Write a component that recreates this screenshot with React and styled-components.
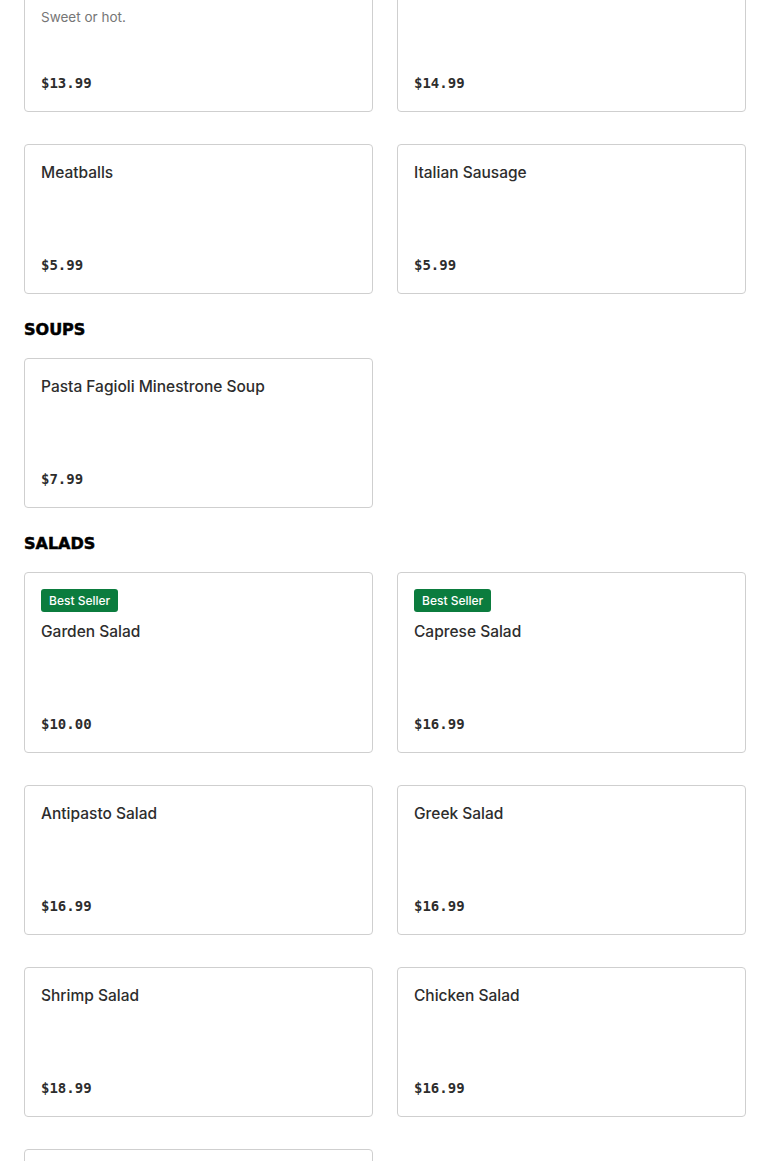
import React from 'react';
import styled, { createGlobalStyle } from 'styled-components';

const GlobalStyle = createGlobalStyle`
  html, body {
    margin: 0;
    padding: 0;
    background: #fff;
    overflow: hidden;
  }
  body {
    font-family: Inter, "Noto Sans", sans-serif;
    color: #2d2d2d;
  }
`;

const Page = styled.div`
  padding: 0 24px;
  margin-top: -38px;
`;

const Section = styled.section`
  display: flex;
  flex-direction: column;
`;

const SectionTitle = styled.h2`
  margin: 24px 0 16px;
  font-family: "DejaVu Sans", sans-serif;
  font-weight: 700;
  font-size: 16px;
  line-height: 24px;
  color: #000;
  -webkit-text-stroke: 0.5px #000;
`;

const Grid = styled.div`
  display: grid;
  grid-template-columns: 1fr 1fr;
  column-gap: 24px;
  row-gap: 32px;
`;

const Card = styled.div`
  box-sizing: border-box;
  min-height: ${p => (p.$featured ? 181 : 150)}px;
  display: flex;
  flex-direction: column;
  padding: 16px;
  border: 1px solid #cfcfcf;
  border-radius: 4px;
  background: #fff;
`;

const Badge = styled.span`
  align-self: flex-start;
  height: 23px;
  line-height: 23px;
  padding: 0 8px;
  margin-bottom: 8px;
  border-radius: 3px;
  background: #0b7c3e;
  color: #fff;
  font-size: 12px;
  font-weight: 500;
`;

const Name = styled.div`
  font-size: 15.5px;
  font-weight: 500;
  line-height: 24px;
  color: #2d2d2d;
`;

const Desc = styled.div`
  margin-top: 4px;
  font-size: 13.5px;
  line-height: 20px;
  color: #767676;
`;

const Price = styled.div`
  margin-top: auto;
  padding-top: 16px;
  font-family: "DejaVu Sans Mono", "Liberation Mono", monospace;
  font-weight: 700;
  font-size: 14px;
  line-height: 24px;
  color: #2d2d2d;
`;

const sections = [
  {
    title: null,
    items: [
      { name: 'Sausage & Peppers', desc: 'Sweet or hot.', price: '$13.99' },
      { name: 'Chicken Parmigiana', price: '$14.99' },
      { name: 'Meatballs', price: '$5.99' },
      { name: 'Italian Sausage', price: '$5.99' },
    ],
  },
  {
    title: 'SOUPS',
    items: [{ name: 'Pasta Fagioli Minestrone Soup', price: '$7.99' }],
  },
  {
    title: 'SALADS',
    items: [
      { name: 'Garden Salad', price: '$10.00', best: true },
      { name: 'Caprese Salad', price: '$16.99', best: true },
      { name: 'Antipasto Salad', price: '$16.99' },
      { name: 'Greek Salad', price: '$16.99' },
      { name: 'Shrimp Salad', price: '$18.99' },
      { name: 'Chicken Salad', price: '$16.99' },
      { name: 'Tuna Salad', price: '$16.99' },
    ],
  },
];

const MenuCard = ({ item }) => (
  <Card $featured={item.best}>
    {item.best && <Badge>Best Seller</Badge>}
    <Name>{item.name}</Name>
    {item.desc && <Desc>{item.desc}</Desc>}
    <Price>{item.price}</Price>
  </Card>
);

export default function App() {
  return (
    <>
      <GlobalStyle />
      <Page>
        {sections.map((section, i) => (
          <Section key={i}>
            {section.title && <SectionTitle>{section.title}</SectionTitle>}
            <Grid>
              {section.items.map(item => (
                <MenuCard key={item.name} item={item} />
              ))}
            </Grid>
          </Section>
        ))}
      </Page>
    </>
  );
}
